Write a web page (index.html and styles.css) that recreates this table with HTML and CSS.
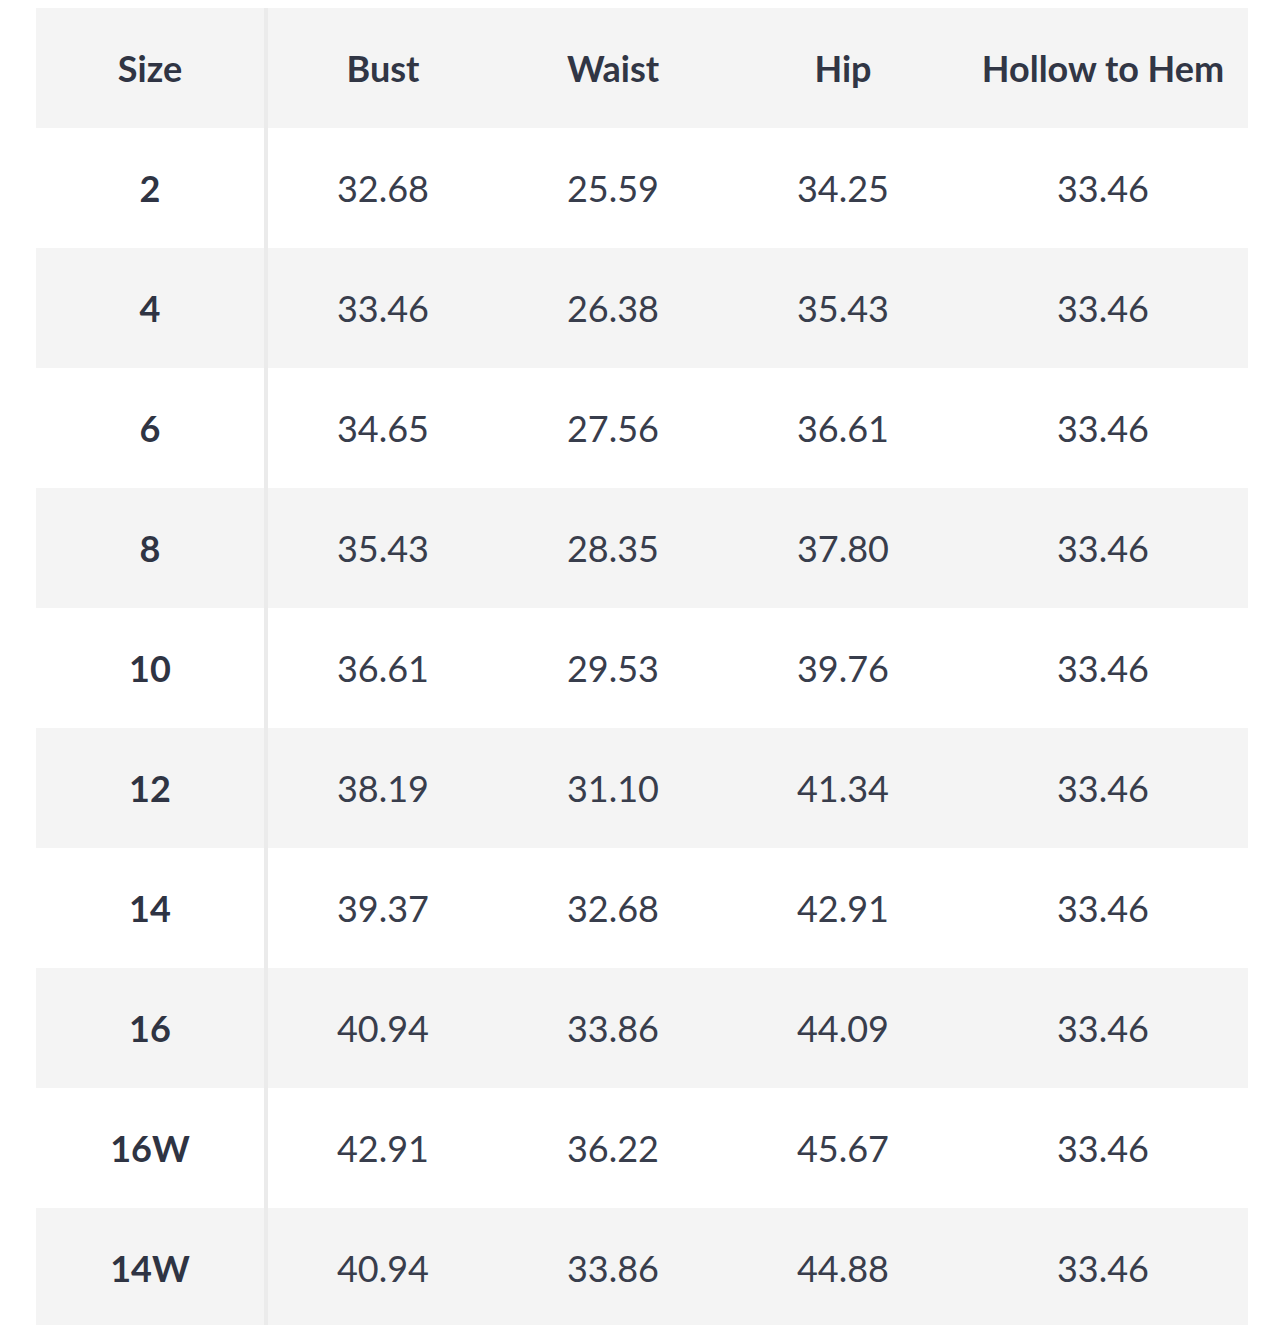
FILE: index.html
```html
<!DOCTYPE html>
<html>
<head>
<meta charset="utf-8">
<link rel="stylesheet" href="styles.css">
</head>
<body>
<div class="wrap">
<table class="chart">
  <colgroup>
    <col class="c-size"><col class="c-mid"><col class="c-mid"><col class="c-mid"><col class="c-last">
  </colgroup>
  <thead>
    <tr><th class="size">Size</th><th>Bust</th><th>Waist</th><th>Hip</th><th>Hollow to Hem</th></tr>
  </thead>
  <tbody>
    <tr><td class="size">2</td><td>32.68</td><td>25.59</td><td>34.25</td><td>33.46</td></tr>
    <tr><td class="size">4</td><td>33.46</td><td>26.38</td><td>35.43</td><td>33.46</td></tr>
    <tr><td class="size">6</td><td>34.65</td><td>27.56</td><td>36.61</td><td>33.46</td></tr>
    <tr><td class="size">8</td><td>35.43</td><td>28.35</td><td>37.80</td><td>33.46</td></tr>
    <tr><td class="size">10</td><td>36.61</td><td>29.53</td><td>39.76</td><td>33.46</td></tr>
    <tr><td class="size">12</td><td>38.19</td><td>31.10</td><td>41.34</td><td>33.46</td></tr>
    <tr><td class="size">14</td><td>39.37</td><td>32.68</td><td>42.91</td><td>33.46</td></tr>
    <tr><td class="size">16</td><td>40.94</td><td>33.86</td><td>44.09</td><td>33.46</td></tr>
    <tr><td class="size">16W</td><td>42.91</td><td>36.22</td><td>45.67</td><td>33.46</td></tr>
    <tr><td class="size">14W</td><td>40.94</td><td>33.86</td><td>44.88</td><td>33.46</td></tr>
  </tbody>
</table>
</div>
</body>
</html>
```
FILE: styles.css
```css
html, body {
  margin: 0;
  padding: 0;
  background: #ffffff;
}
.wrap {
  padding: 8px 36px 0 36px;
}
.chart {
  width: 1212px;
  border-collapse: separate;
  border-spacing: 0;
  table-layout: fixed;
  font-family: Lato, "Open Sans", sans-serif;
  color: #383d4c;
}
.c-size { width: 232px; }
.c-mid { width: 230px; }
.c-last { width: 290px; }
.chart th, .chart td {
  height: 120px;
  padding: 0;
  text-align: center;
  vertical-align: middle;
  font-size: 36px;
  line-height: 1;
  box-sizing: border-box;
}
.chart th {
  font-weight: 700;
  color: #313645;
}
.chart td {
  font-weight: 400;
}
.chart .size {
  font-weight: 700;
  color: #2f3443;
  border-right: 4px solid #ebebeb;
}
.chart thead tr {
  background: #f4f4f4;
}
.chart tbody tr:nth-child(even) {
  background: #f4f4f4;
}
.chart tbody tr:nth-child(odd) {
  background: #ffffff;
}
```
